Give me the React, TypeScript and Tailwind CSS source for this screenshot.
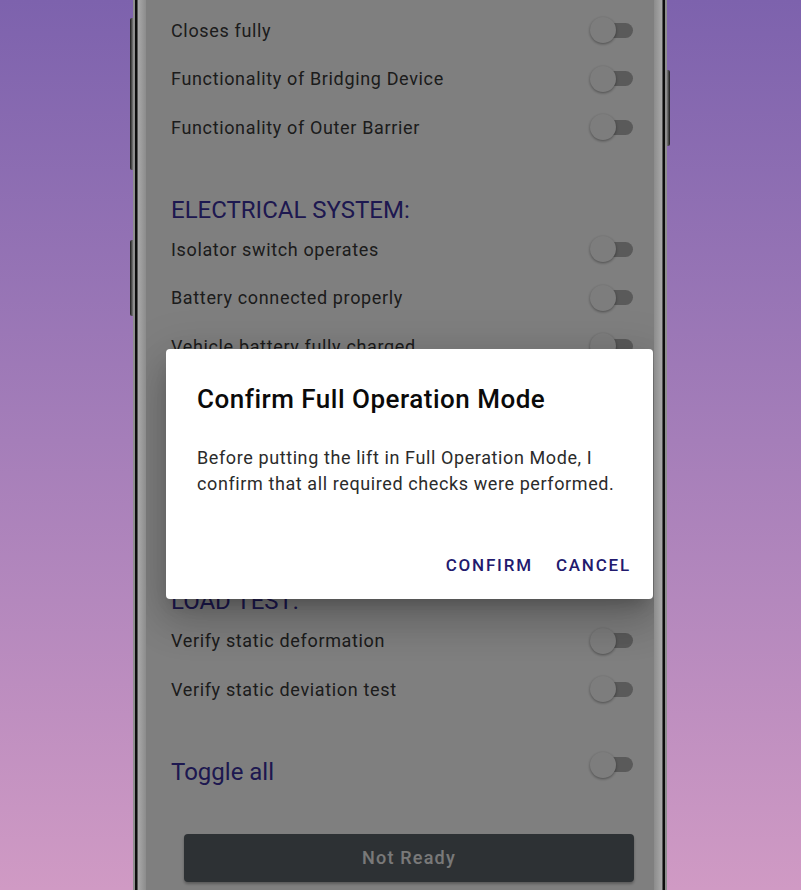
import React from "react";

function Toggle() {
  return (
    <div className="relative w-[44px] h-[26px] shrink-0">
      <div className="absolute left-[7px] top-[5.5px] w-[36px] h-[15px] rounded-full bg-[#b4b4b4]" />
      <div className="absolute left-0 top-0 w-[26px] h-[26px] rounded-full bg-[#fafafa] shadow-[0_1px_3px_rgba(0,0,0,0.4)]" />
    </div>
  );
}

function Row({ label }: { label: string }) {
  return (
    <div className="h-[48.5px] flex items-center justify-between">
      <span className="text-[18px] tracking-[0.65px] text-[#383838]">{label}</span>
      <Toggle />
    </div>
  );
}

function Heading({ label }: { label: string }) {
  return (
    <div className="h-[30px] flex items-center text-[24px] leading-[30px] text-[#3a30a0]">{label}</div>
  );
}

export default function App() {
  return (
    <div
      className="w-full h-[890px] overflow-hidden flex justify-center bg-gradient-to-b from-[#7d62ad] to-[#d09ac4]"
      style={{ fontFamily: "Roboto, 'Noto Sans', sans-serif" }}
    >
      <div className="relative w-[534px] h-full flex ml-[-1px]">
        {/* side buttons */}
        <div className="absolute left-[-3px] top-[18px] w-[4px] h-[152px] rounded-l-[2px] bg-gradient-to-r from-[#1a1a1a] to-[#a0a0a0]" />
        <div className="absolute left-[-3px] top-[240px] w-[4px] h-[76px] rounded-l-[2px] bg-gradient-to-r from-[#1a1a1a] to-[#a0a0a0]" />
        <div className="absolute right-[-3px] top-[70px] w-[4px] h-[76px] rounded-r-[2px] bg-gradient-to-l from-[#1a1a1a] to-[#a0a0a0]" />

        {/* left frame */}
        <div className="w-[2px] bg-[#8e8e8e]" />
        <div className="w-[2px] bg-[#0d0d0d]" />
        <div className="w-[1px] bg-[#555555]" />
        <div className="w-[8px] bg-gradient-to-r from-[#a9a9a9] to-[#8c8c8c]" />

        {/* screen */}
        <div className="relative flex-1 bg-white overflow-hidden">
          <div className="pl-[25px] pr-[20px] pt-[5.75px] flex flex-col">
            <Row label="Closes fully" />
            <Row label="Functionality of Bridging Device" />
            <Row label="Functionality of Outer Barrier" />
            <div className="mt-[43.75px]">
              <Heading label="ELECTRICAL SYSTEM:" />
            </div>
            <Row label="Isolator switch operates" />
            <Row label="Battery connected properly" />
            <Row label="Vehicle battery fully charged" />
            <div className="h-[215.75px]" />
            <Heading label="LOAD TEST:" />
            <Row label="Verify static deformation" />
            <Row label="Verify static deviation test" />
            <div className="mt-[38.25px] flex items-start justify-between">
              <span className="mt-[4px] text-[24px] leading-[32px] text-[#3a30a0]">Toggle all</span>
              <Toggle />
            </div>
            <div className="mt-[46px] ml-[13px] h-[48px] rounded-[4px] bg-[#5a6268] shadow-[0_2px_3px_rgba(0,0,0,0.3)] flex items-center justify-center">
              <span className="text-[18px] font-medium tracking-[1.2px] text-[#f2f2f2]">Not Ready</span>
            </div>
          </div>

          {/* scrim */}
          <div className="absolute inset-0 bg-black/50" />

          {/* dialog */}
          <div className="absolute left-[20px] top-[349px] w-[487px] h-[250px] bg-white rounded-[4px] shadow-[0_11px_15px_-7px_rgba(0,0,0,0.2),0_24px_38px_3px_rgba(0,0,0,0.14),0_9px_46px_8px_rgba(0,0,0,0.12)] flex flex-col pl-[31px] pr-[20px] pt-[35px]">
            <div className="text-[26px] leading-[30px] font-medium text-[#0a0a0a] tracking-[0.5px]">Confirm Full Operation Mode</div>
            <div className="mt-[31px] text-[18px] leading-[26px] tracking-[0.6px] text-[#2b2b2b] whitespace-nowrap">
              Before putting the lift in Full Operation Mode, I
              <br />
              confirm that all required checks were performed.
            </div>
            <div className="mt-[51px] pr-[2px] flex justify-end gap-[23px] h-[36px] items-center">
              <span className="text-[17px] font-medium tracking-[1.8px] text-[#221a6e]">CONFIRM</span>
              <span className="text-[17px] font-medium tracking-[1.8px] text-[#221a6e]">CANCEL</span>
            </div>
          </div>
        </div>

        {/* right frame */}
        <div className="w-[8px] bg-gradient-to-r from-[#8c8c8c] to-[#a9a9a9]" />
        <div className="w-[1px] bg-[#555555]" />
        <div className="w-[2px] bg-[#0d0d0d]" />
        <div className="w-[2px] bg-[#8e8e8e]" />
      </div>
    </div>
  );
}
